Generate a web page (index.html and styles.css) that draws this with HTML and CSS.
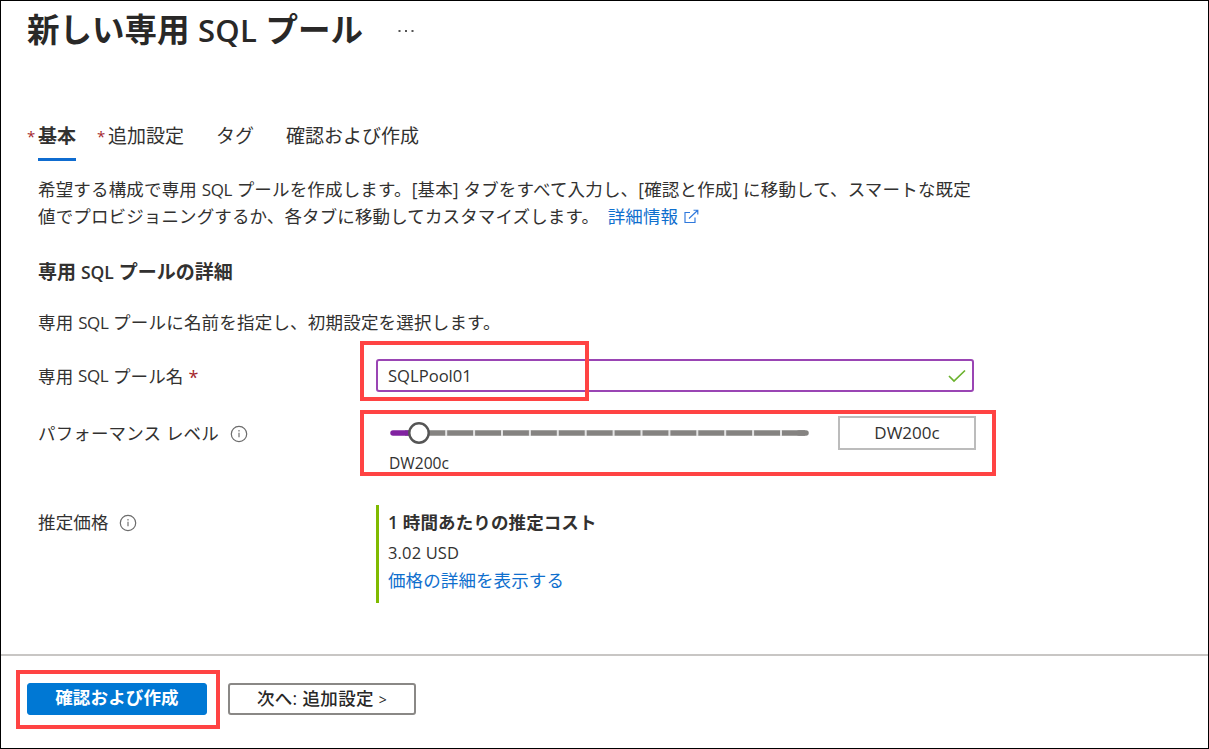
FILE: index.html
```html
<!DOCTYPE html>
<html lang="ja">
<head>
<meta charset="utf-8">
<title>新しい専用 SQL プール</title>
<link rel="stylesheet" href="styles.css">
</head>
<body>
<div class="page">
  <header class="header">
    <h1 class="title">新しい専用 <span class="title-latin">SQL</span> プール</h1>
    <svg class="more" width="16" height="4" viewBox="0 0 16 4"><g fill="#555"><rect x="0.5" y="1" width="2" height="2"/><rect x="7" y="1" width="2" height="2"/><rect x="13.5" y="1" width="2" height="2"/></g></svg>
  </header>

  <nav class="tabs">
    <a class="tab tab-active"><span class="star">*</span><span class="tab-text">基本</span></a>
    <a class="tab tab-extra"><span class="star">*</span><span class="tab-text">追加設定</span></a>
    <a class="tab tab-tag"><span class="tab-text">タグ</span></a>
    <a class="tab tab-review"><span class="tab-text">確認および作成</span></a>
  </nav>

  <main class="content">
    <p class="intro"><span class="line line-one">希望する構成で専用 <span class="latin">SQL</span> プールを作成します。[基本] タブをすべて入力し、[確認と作成] に移動して、スマートな既定</span><span class="line line-two">値でプロビジョニングするか、各タブに移動してカスタマイズします。 <a class="link more-info">詳細情報</a><svg class="external" width="15" height="15" viewBox="0 0 15 15" fill="none" stroke="#2e78dc" stroke-width="1.15"><path d="M6 3.5H1v10h10V8.5M5 9.5l8.5-8M9.5 1.2h4.3v4.3"/></svg></span></p>
    <h2 class="section-title">専用 <span class="section-latin">SQL</span> プールの詳細</h2>
    <p class="section-note">専用 <span class="latin">SQL</span> プールに名前を指定し、初期設定を選択します。</p>

    <div class="row row-name">
      <div class="label label-name">専用 <span class="latin">SQL</span> プール名<span class="required">*</span></div>
      <div class="mark mark-name"></div>
      <div class="input"><span class="input-value">SQLPool01</span><svg width="18" height="14" viewBox="0 0 18 14" fill="none" stroke="#6bb22e" stroke-width="1.7"><path d="M1 7l5 5L17 1.5"/></svg></div>
    </div>

    <div class="row row-level">
      <div class="label label-level">パフォーマンス レベル<svg class="info" width="18" height="18" viewBox="0 0 18 18"><circle cx="9" cy="9" r="7.7" fill="none" stroke="#6c6c6c" stroke-width="1.2"/><path d="M9 7.7v4.6M9 5v1.5" stroke="#888" stroke-width="1.4"/></svg></div>
      <div class="mark mark-level"></div>
      <div class="slider">
        <svg class="track" width="422" height="26" viewBox="0 0 422 26">
          <path d="M16 13H416" stroke="#858381" stroke-width="5.5"/>
          <path d="M410 13H417" stroke="#858381" stroke-width="5.5" stroke-linecap="round"/>
          <path d="M4 13H20" stroke="#8123a1" stroke-width="5.5" stroke-linecap="round"/>
          <path d="M56.2 13H400" stroke="#e4e4e4" stroke-width="6" stroke-dasharray="2 25.9"/>
          <circle cx="30" cy="13" r="9.7" fill="#fff" stroke="#555" stroke-width="2.4"/>
        </svg>
        <span class="slider-value">DW200c</span>
      </div>
      <div class="level-box">DW200c</div>
    </div>

    <div class="row row-price">
      <div class="label label-price">推定価格<svg class="info" width="18" height="18" viewBox="0 0 18 18"><circle cx="9" cy="9" r="7.7" fill="none" stroke="#6c6c6c" stroke-width="1.2"/><path d="M9 7.7v4.6M9 5v1.5" stroke="#888" stroke-width="1.4"/></svg></div>
      <div class="price">
        <div class="price-title">1 時間あたりの推定コスト</div>
        <div class="price-value">3.02 USD</div>
        <a class="link price-link">価格の詳細を表示する</a>
      </div>
    </div>
  </main>

  <footer class="footer">
    <div class="mark mark-button"></div>
    <button class="button primary">確認および作成</button>
    <button class="button secondary">次へ: 追加設定 <span class="chevron">&gt;</span></button>
  </footer>
</div>
</body>
</html>
```

FILE: styles.css
```css
* { box-sizing: border-box; }
body {
  margin: 0;
  background: #fff;
  color: #323130;
  font-family: "Open Sans", "Noto Sans CJK JP", sans-serif;
  font-size: 17.5px;
}
h1, h2, p { margin: 0; }
.page {
  display: flex;
  flex-direction: column;
  width: 1209px;
  height: 749px;
  border: 1px solid #000;
  white-space: nowrap;
  overflow: hidden;
}
.header { display: flex; height: 60px; padding-left: 26px; }
.title { width: 370px; font-size: 32.5px; font-weight: 600; line-height: 58px; letter-spacing: 0; color: #292827; }
.title-latin { font-size: 31px; letter-spacing: .3px; }
.more { margin: 28px 0 0 1px; }
.tabs { display: flex; height: 99px; padding: 60px 0 0 26px; font-size: 19px; line-height: 31px; }
.tab { display: flex; height: 40px; }
.star { width: 11px; color: #a4262c; font-size: 15px; }
.tab-text { height: 40px; }
.tab-active { width: 70px; }
.tab-active .tab-text { border-bottom: 3px solid #0f6cd0; font-weight: 600; }
.tab-extra { width: 119px; }
.tab-tag { width: 70px; }
.content { height: 494px; padding-left: 37px; }
.intro { height: 71px; padding-top: 16px; line-height: 27px; }
.line { display: block; }
.line-one { letter-spacing: .17px; }
.line-two { letter-spacing: .13px; }
.latin { font-size: 17px; letter-spacing: -.4px; }
.link { color: #0f6fce; }
.more-info { margin-left: 4px; }
.external { margin-left: 6px; vertical-align: -1px; }
.section-title { padding-top: 26px; font-size: 19px; font-weight: 600; line-height: 30px; }
.section-latin { font-size: 17.5px; }
.section-note { padding-top: 20px; line-height: 30px; letter-spacing: .2px; }
.row { display: flex; position: relative; }
.label { display: flex; align-items: center; width: 338px; height: 32px; white-space: pre; letter-spacing: .15px; }
.row-name { height: 57px; padding-top: 21px; }
.required { color: #a4262c; font-size: 18px; margin: 4px 0 0 5px; }
.input { display: flex; align-items: center; justify-content: space-between; width: 598px; height: 33px; padding: 0 6px 0 10px; border: 2px solid #9a45b4; border-radius: 3px; }
.input-value { font-size: 16.6px; }
.row-level { height: 86px; padding-top: 21px; }
.info { margin: 3px 0 0 11px; }
.slider { display: flex; flex-direction: column; width: 462px; padding-left: 13px; }
.track { margin-top: 4px; }
.slider-value { font-size: 15.6px; line-height: 30px; padding-top: 2px; }
.level-box { display: flex; align-items: center; justify-content: center; width: 138px; height: 34px; padding-bottom: 1px; border: 2px solid #bcbcbc; font-size: 17px; }
.row-price { padding-top: 24px; }
.label-price .info { margin: 4px 0 0 10px; }
.price { display: flex; flex-direction: column; height: 98px; padding-left: 9px; border-left: 3px solid #7fba00; }
.price-title { font-weight: 600; line-height: 34px; letter-spacing: .12px; }
.price-value { font-size: 16.5px; line-height: 28px; letter-spacing: .15px; }
.price-link { line-height: 26px; letter-spacing: .1px; }
.footer { display: flex; position: relative; flex: 1; padding: 27px 0 0 26px; gap: 21px; border-top: 2px solid #c8c6c4; }
.button { width: 180px; height: 32px; padding: 0 0 4px; border: 1px solid #0078d4; border-radius: 3px; background: #0078d4; color: #fff; font: 600 17.5px/26px "Open Sans", "Noto Sans CJK JP", sans-serif; letter-spacing: .15px; }
.secondary { width: 188px; border: 2px solid #8a8886; background: #fff; color: #292827; font-weight: 500; letter-spacing: .35px; }
.chevron { font-size: 14px; }
/* Highlight frames drawn over the form */
.mark { position: absolute; z-index: 1; border: 4px solid #ff4343; }
.mark-name { left: 322px; top: 3px; width: 229px; height: 60px; }
.mark-level { left: 322px; top: 15px; width: 636px; height: 66px; }
.mark-button { left: 15px; top: 14px; width: 204px; height: 59px; }
```
